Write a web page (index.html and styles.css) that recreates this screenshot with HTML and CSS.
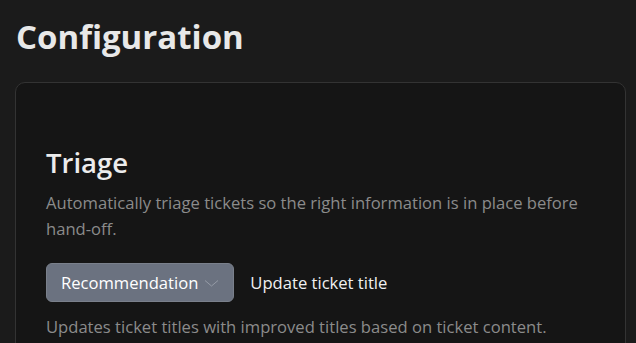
FILE: index.html
```html
<!DOCTYPE html>
<html lang="en">
<head>
  <meta charset="UTF-8" />
  <meta name="viewport" content="width=device-width, initial-scale=1.0" />
  <title>Configuration</title>
  <link rel="stylesheet" href="styles.css">
</head>
<body>

  <!-- Page title -->
  <h1 class="page-title">Configuration</h1>

  <!-- Settings card -->
  <section class="card">
    <h2 class="section-title">Triage</h2>
    <p class="section-desc">Automatically triage tickets so the right information is in place before hand-off.</p>

    <div class="setting-row">
      <button class="mode-select">
        Recommendation
        <svg class="chevron" width="15" height="8" viewBox="0 0 15 8" fill="none">
          <path d="M1 1.5l6.5 5.5L14 1.5" stroke="currentColor" stroke-width="1"/>
        </svg>
      </button>
      <span class="setting-name">Update ticket title</span>
    </div>
    <p class="setting-desc">Updates ticket titles with improved titles based on ticket content.</p>
  </section>

</body>
</html>
```
FILE: styles.css
```css
* { margin: 0; padding: 0; box-sizing: border-box; }
body {
  font-family: 'Open Sans', 'Noto Sans', sans-serif;
  background-color: #1b1b1b;
  color: #e6e6e6;
  padding: 14px 10px 0 15px;
  overflow: hidden;
}
.page-title {
  font-size: 33px;
  font-weight: 700;
  line-height: 46px;
  padding-left: 1px;
  color: #e8e8e8;
}
.card {
  margin-top: 22px;
  background-color: #151515;
  border: 1px solid #333;
  border-radius: 10px;
  padding: 62px 30px 40px;
  min-height: 300px;
}
.section-title {
  font-size: 27.5px;
  font-weight: 600;
  line-height: 36px;
  color: #ececec;
}
.section-desc {
  margin-top: 9px;
  font-size: 16.6px;
  line-height: 26px;
  color: #8b8b8b;
}
.setting-row {
  margin-top: 21px;
  display: flex;
  align-items: center;
  gap: 16px;
}
.mode-select {
  display: flex;
  align-items: center;
  gap: 6px;
  height: 39px;
  padding: 0 14px;
  background-color: #6b7280;
  border: 1px solid #7a808b;
  border-radius: 6px;
  font-family: inherit;
  font-size: 16.6px;
  color: #fff;
}
.chevron { color: #959ba6; }
.setting-name {
  font-size: 16.6px;
  color: #f0f0f0;
}
.setting-desc {
  margin-top: 12px;
  font-size: 16.6px;
  line-height: 26px;
  color: #8b8b8b;
}
```
